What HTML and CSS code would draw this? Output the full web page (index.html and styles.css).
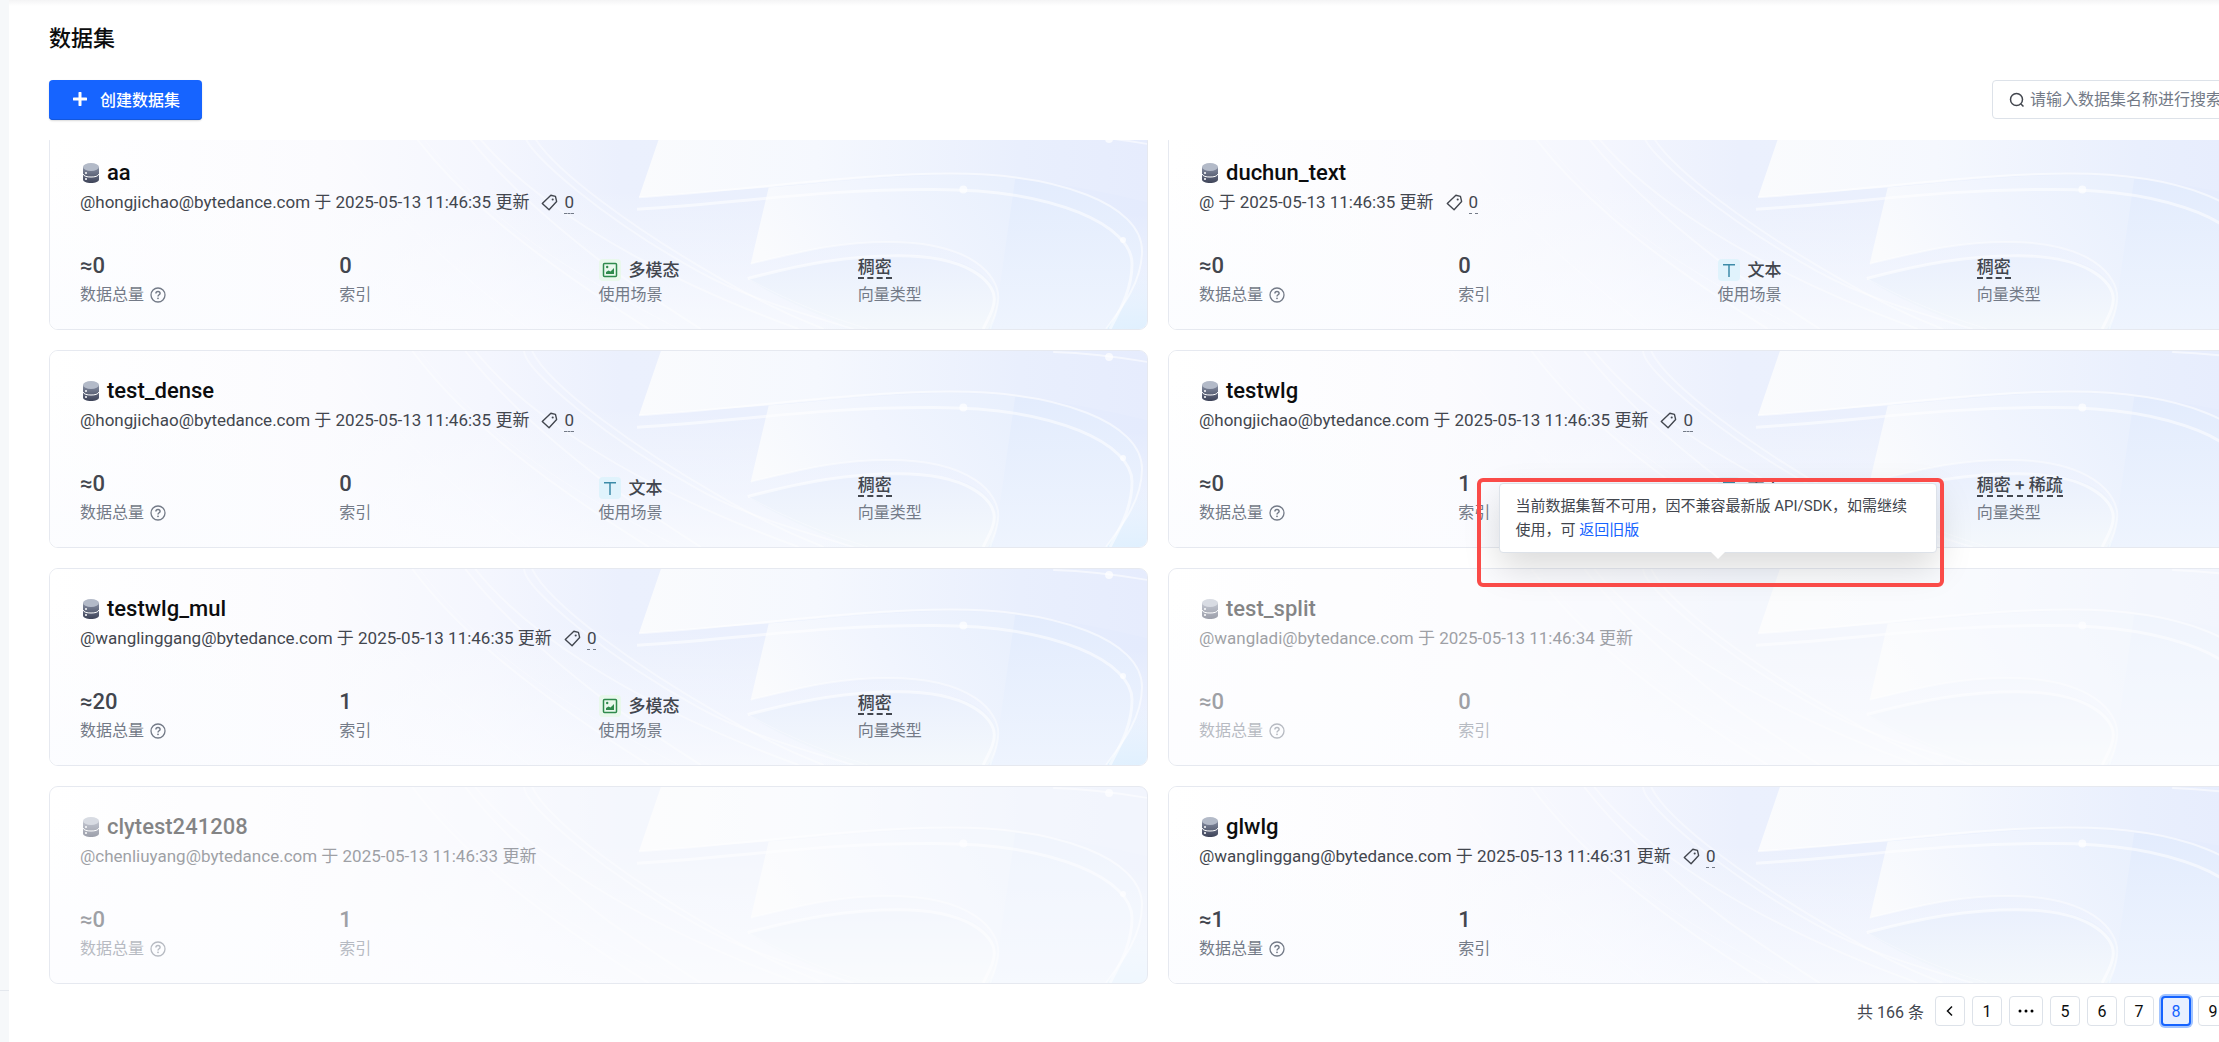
FILE: index.html
```html
<!DOCTYPE html>
<html lang="zh-CN">
<head>
    <meta charset="UTF-8">
    <title>数据集</title>
    <link rel="stylesheet" href="styles.css">
</head>
<body>

<!-- Shared shapes -->
<svg class="sprite" aria-hidden="true">
    <defs>
        <linearGradient id="base" x1="0" y1="0" x2="1" y2="0">
            <stop offset="0" stop-color="#ffffff"/>
            <stop offset="0.25" stop-color="#fbfbfe"/>
            <stop offset="0.4" stop-color="#f4f6fe"/>
            <stop offset="0.52" stop-color="#ebf0fd"/>
            <stop offset="0.8" stop-color="#e9effd"/>
            <stop offset="1" stop-color="#e4ebfd"/>
        </linearGradient>
        <linearGradient id="fade" x1="0.65" y1="0" x2="0.4" y2="1">
            <stop offset="0.3" stop-color="#fbfcff" stop-opacity="0"/>
            <stop offset="1" stop-color="#fbfcff" stop-opacity="0.8"/>
        </linearGradient>
        <linearGradient id="sheet-a" x1="0" y1="0" x2="1" y2="0">
            <stop offset="0" stop-color="#fafbfd"/>
            <stop offset="0.35" stop-color="#f5f8fe"/>
            <stop offset="0.75" stop-color="#e9effd"/>
            <stop offset="1" stop-color="#e6ecfd"/>
        </linearGradient>
        <linearGradient id="sheet-b" x1="0" y1="0.5" x2="1" y2="0.2">
            <stop offset="0" stop-color="#fafbfd"/>
            <stop offset="0.5" stop-color="#f1f5fe"/>
            <stop offset="1" stop-color="#e9f0fd"/>
        </linearGradient>
        <linearGradient id="sheet-c" x1="0" y1="0" x2="0" y2="1">
            <stop offset="0" stop-color="#eaf0fd"/>
            <stop offset="1" stop-color="#f4f8fc"/>
        </linearGradient>
        <linearGradient id="sheet-d" x1="0" y1="0" x2="0" y2="1">
            <stop offset="0" stop-color="#e3ecfd"/>
            <stop offset="1" stop-color="#eef4fe"/>
        </linearGradient>
        <radialGradient id="corner" cx="1" cy="1" r="0.3">
            <stop offset="0" stop-color="#e0f0fe"/>
            <stop offset="1" stop-color="#e0f0fe" stop-opacity="0"/>
        </radialGradient>
        <linearGradient id="drum" x1="0" y1="0" x2="0" y2="1">
            <stop offset="0" stop-color="#858da0"/>
            <stop offset="1" stop-color="#3d4358"/>
        </linearGradient>
    </defs>

    <symbol id="card-art" viewBox="0 0 1099 198" preserveAspectRatio="none">
        <rect width="1099" height="198" fill="url(#base)"/>
        <rect width="1099" height="198" fill="url(#fade)"/>
        <rect width="1099" height="198" fill="url(#corner)"/>
        <path fill="url(#sheet-d)" d="M966 46C1050 54 1094 86 1094 119C1094 150 1075 175 1058 198H944Z"/>
        <path fill="url(#sheet-a)" d="M612 0H1099V70C1060 60 1010 50 966 46C900 37 837 44 719 55L590 65Z"/>
        <path fill="url(#sheet-b)" d="M720 55C837 44 900 38 967 46L950 166C945 140 925 110 840 110C790 110 756 119 702 132Z"/>
        <path fill="url(#sheet-c)" d="M699 147C756 132 800 124 858 124C940 124 965 160 940 198H805C765 182 725 165 699 147Z"/>
        <g fill="none" stroke="#ffffff" stroke-width="2" stroke-opacity="0.55">
            <path d="M590 65C700 58 800 41 903 41C1010 41 1094 72 1094 119C1094 150 1075 175 1058 198"/>
            <path stroke-width="3" d="M588 77C700 70 770 57 880 57C1010 56 1084 95 1084 132C1084 160 1070 182 1062 198"/>
            <path d="M1005 1C1040 2 1070 6 1099 11"/>
            <path stroke-opacity="0.45" d="M702 132C756 119 790 110 840 110C925 110 950 145 950 166C950 180 944 190 942 198"/>
            <path stroke-width="3" d="M699 147C756 132 800 124 850 124C920 124 946 150 946 168C946 180 938 190 935 198"/>
            <g stroke-opacity="0.4">
                <path d="M475 0C475 20 560 90 650 140C700 168 760 184 805 198"/>
                <path d="M483 0C500 36 590 100 670 146C700 164 740 184 775 198"/>
                <path d="M416 0C450 45 500 90 560 136C600 164 630 184 652 198"/>
                <path d="M426 0C470 56 570 132 750 198"/>
                <path d="M363 0C400 50 460 110 600 198"/>
            </g>
            <g stroke-opacity="0.3" stroke-width="1">
                <path d="M282 0C320 56 370 110 480 198"/>
                <path d="M370 0C430 80 500 130 630 198"/>
                <path d="M699 147C740 170 780 186 820 198"/>
            </g>
        </g>
        <g fill="#ffffff" fill-opacity="0.7">
            <circle cx="915" cy="57" r="4"/>
            <circle cx="1075" cy="108" r="3"/>
            <circle cx="1061" cy="6" r="4"/>
        </g>
    </symbol>

    <symbol id="icon-db" viewBox="0 0 16 20">
        <path fill="url(#drum)" d="M0 4H16V16.5C16 18.6 12.4 20 8 20S0 18.6 0 16.5Z"/>
        <ellipse cx="8" cy="4" rx="8" ry="4" fill="#b3bac8"/>
        <path fill="none" stroke="#ffffff" stroke-width="1" d="M0 11C1 13.400 4 14 8 14S15 13.400 16 11"/>
        <circle cx="3" cy="10" r="1" fill="#ffffff"/>
        <circle cx="3" cy="16" r="1" fill="#ffffff"/>
    </symbol>

    <symbol id="icon-tag" viewBox="0 0 16 16">
        <path fill="none" stroke="currentColor" stroke-width="1.300" stroke-linejoin="round" d="M9.300 1.200L13.600 2.300L14.700 7L7.600 14.800L1.200 9Z"/>
        <circle cx="11" cy="5.200" r="1" fill="currentColor"/>
    </symbol>

    <symbol id="icon-help" viewBox="0 0 16 16">
        <circle cx="8" cy="8" r="7" fill="none" stroke="currentColor" stroke-width="1.300"/>
        <path fill="none" stroke="currentColor" stroke-width="1.400" d="M5.900 6.500C5.900 5.200 6.800 4.500 8 4.500S10.100 5.200 10.100 6.400C10.100 7.600 8 7.900 8 9.400"/>
        <circle cx="8" cy="11.300" r="0.900" fill="currentColor"/>
    </symbol>

    <symbol id="icon-image" viewBox="0 0 22 22">
        <rect width="22" height="22" rx="4" fill="#e9f8ec"/>
        <rect x="4.500" y="4.500" width="13" height="13" rx="1" fill="none" stroke="#2f8a4c" stroke-width="1.500"/>
        <path fill="#2f8a4c" d="M7 15V13L9.500 11.500L11.500 12.500L15 9V15Z"/>
        <circle cx="8.200" cy="8" r="1.200" fill="#2f8a4c"/>
    </symbol>

    <symbol id="icon-text" viewBox="0 0 22 22">
        <rect width="22" height="22" rx="4" fill="#e0f3fc"/>
        <path fill="none" stroke="#3c8ba8" stroke-width="1.500" d="M5 5.700H17M11 5.700V18"/>
    </symbol>
</svg>

<div class="layout">
    <aside class="sidebar"><div class="sidebar-footer"></div></aside>

    <main class="page">
        <h1 class="page-title">数据集</h1>

        <div class="toolbar">
            <button class="create-button" type="button">
                <svg width="14" height="14" viewBox="0 0 14 14" aria-hidden="true"><path d="M7 1V13M1 7H13" stroke="#fff" stroke-width="3" stroke-linecap="round"/></svg>
                创建数据集
            </button>
            <label class="search">
                <svg width="16" height="16" viewBox="0 0 16 16" aria-hidden="true"><circle cx="7.500" cy="7.500" r="6" fill="none" stroke="#42464e" stroke-width="1.500"/><path d="M12 12L14.500 14.500" stroke="#42464e" stroke-width="1.500"/></svg>
                <input type="text" placeholder="请输入数据集名称进行搜索" aria-label="搜索数据集">
            </label>
        </div>

        <div class="list">
            <div class="cards">

                <article class="card">
                    <svg class="card-art"><use href="#card-art"/></svg>
                    <div class="card-body">
                        <h2 class="card-title"><svg class="db"><use href="#icon-db"/></svg>aa</h2>
                        <p class="card-meta">@hongjichao@bytedance.com 于 2025-05-13 11:46:35 更新 <svg class="tag"><use href="#icon-tag"/></svg><span class="tag-count">0</span></p>
                        <dl class="stats">
                            <div class="stat"><dd>≈0</dd><dt>数据总量 <svg class="help"><use href="#icon-help"/></svg></dt></div>
                            <div class="stat"><dd>0</dd><dt>索引</dt></div>
                            <div class="stat"><dd class="scene"><svg><use href="#icon-image"/></svg>多模态</dd><dt>使用场景</dt></div>
                            <div class="stat"><dd><span class="vector">稠密</span></dd><dt>向量类型</dt></div>
                        </dl>
                    </div>
                </article>

                <article class="card">
                    <svg class="card-art"><use href="#card-art"/></svg>
                    <div class="card-body">
                        <h2 class="card-title"><svg class="db"><use href="#icon-db"/></svg>duchun_text</h2>
                        <p class="card-meta">@ 于 2025-05-13 11:46:35 更新 <svg class="tag"><use href="#icon-tag"/></svg><span class="tag-count">0</span></p>
                        <dl class="stats">
                            <div class="stat"><dd>≈0</dd><dt>数据总量 <svg class="help"><use href="#icon-help"/></svg></dt></div>
                            <div class="stat"><dd>0</dd><dt>索引</dt></div>
                            <div class="stat"><dd class="scene"><svg><use href="#icon-text"/></svg>文本</dd><dt>使用场景</dt></div>
                            <div class="stat"><dd><span class="vector">稠密</span></dd><dt>向量类型</dt></div>
                        </dl>
                    </div>
                </article>

                <article class="card">
                    <svg class="card-art"><use href="#card-art"/></svg>
                    <div class="card-body">
                        <h2 class="card-title"><svg class="db"><use href="#icon-db"/></svg>test_dense</h2>
                        <p class="card-meta">@hongjichao@bytedance.com 于 2025-05-13 11:46:35 更新 <svg class="tag"><use href="#icon-tag"/></svg><span class="tag-count">0</span></p>
                        <dl class="stats">
                            <div class="stat"><dd>≈0</dd><dt>数据总量 <svg class="help"><use href="#icon-help"/></svg></dt></div>
                            <div class="stat"><dd>0</dd><dt>索引</dt></div>
                            <div class="stat"><dd class="scene"><svg><use href="#icon-text"/></svg>文本</dd><dt>使用场景</dt></div>
                            <div class="stat"><dd><span class="vector">稠密</span></dd><dt>向量类型</dt></div>
                        </dl>
                    </div>
                </article>

                <article class="card">
                    <svg class="card-art"><use href="#card-art"/></svg>
                    <div class="card-body">
                        <h2 class="card-title"><svg class="db"><use href="#icon-db"/></svg>testwlg</h2>
                        <p class="card-meta">@hongjichao@bytedance.com 于 2025-05-13 11:46:35 更新 <svg class="tag"><use href="#icon-tag"/></svg><span class="tag-count">0</span></p>
                        <dl class="stats">
                            <div class="stat"><dd>≈0</dd><dt>数据总量 <svg class="help"><use href="#icon-help"/></svg></dt></div>
                            <div class="stat"><dd>1</dd><dt>索引</dt></div>
                            <div class="stat"><dd class="scene"><svg><use href="#icon-text"/></svg>文本</dd><dt>使用场景</dt></div>
                            <div class="stat"><dd><span class="vector">稠密 + 稀疏</span></dd><dt>向量类型</dt></div>
                        </dl>
                    </div>
                </article>

                <article class="card">
                    <svg class="card-art"><use href="#card-art"/></svg>
                    <div class="card-body">
                        <h2 class="card-title"><svg class="db"><use href="#icon-db"/></svg>testwlg_mul</h2>
                        <p class="card-meta">@wanglinggang@bytedance.com 于 2025-05-13 11:46:35 更新 <svg class="tag"><use href="#icon-tag"/></svg><span class="tag-count">0</span></p>
                        <dl class="stats">
                            <div class="stat"><dd>≈20</dd><dt>数据总量 <svg class="help"><use href="#icon-help"/></svg></dt></div>
                            <div class="stat"><dd>1</dd><dt>索引</dt></div>
                            <div class="stat"><dd class="scene"><svg><use href="#icon-image"/></svg>多模态</dd><dt>使用场景</dt></div>
                            <div class="stat"><dd><span class="vector">稠密</span></dd><dt>向量类型</dt></div>
                        </dl>
                    </div>
                </article>

                <article class="card disabled">
                    <svg class="card-art"><use href="#card-art"/></svg>
                    <div class="card-body">
                        <h2 class="card-title"><svg class="db"><use href="#icon-db"/></svg>test_split</h2>
                        <p class="card-meta">@wangladi@bytedance.com 于 2025-05-13 11:46:34 更新</p>
                        <dl class="stats">
                            <div class="stat"><dd>≈0</dd><dt>数据总量 <svg class="help"><use href="#icon-help"/></svg></dt></div>
                            <div class="stat"><dd>0</dd><dt>索引</dt></div>
                        </dl>
                    </div>
                    <div class="tooltip" role="tooltip">当前数据集暂不可用，因不兼容最新版 API/SDK，如需继续使用，可 <a href="#">返回旧版</a></div>
                    <div class="highlight"></div>
                </article>

                <article class="card disabled">
                    <svg class="card-art"><use href="#card-art"/></svg>
                    <div class="card-body">
                        <h2 class="card-title"><svg class="db"><use href="#icon-db"/></svg>clytest241208</h2>
                        <p class="card-meta">@chenliuyang@bytedance.com 于 2025-05-13 11:46:33 更新</p>
                        <dl class="stats">
                            <div class="stat"><dd>≈0</dd><dt>数据总量 <svg class="help"><use href="#icon-help"/></svg></dt></div>
                            <div class="stat"><dd>1</dd><dt>索引</dt></div>
                        </dl>
                    </div>
                </article>

                <article class="card">
                    <svg class="card-art"><use href="#card-art"/></svg>
                    <div class="card-body">
                        <h2 class="card-title"><svg class="db"><use href="#icon-db"/></svg>glwlg</h2>
                        <p class="card-meta">@wanglinggang@bytedance.com 于 2025-05-13 11:46:31 更新 <svg class="tag"><use href="#icon-tag"/></svg><span class="tag-count">0</span></p>
                        <dl class="stats">
                            <div class="stat"><dd>≈1</dd><dt>数据总量 <svg class="help"><use href="#icon-help"/></svg></dt></div>
                            <div class="stat"><dd>1</dd><dt>索引</dt></div>
                        </dl>
                    </div>
                </article>

            </div>
        </div>

        <nav class="pagination" aria-label="分页">
            <span class="total">共 166 条</span>
            <button type="button" aria-label="上一页"><svg width="12" height="12" viewBox="0 0 12 12"><path d="M8 1.500L3.500 6L8 10.500" fill="none" stroke="#0c0d0e" stroke-width="1.500"/></svg></button>
            <button type="button">1</button>
            <button type="button" class="more" aria-label="更多"><svg width="16" height="4" viewBox="0 0 16 4"><circle cx="2" cy="2" r="1.500"/><circle cx="8" cy="2" r="1.500"/><circle cx="14" cy="2" r="1.500"/></svg></button>
            <button type="button">5</button>
            <button type="button">6</button>
            <button type="button">7</button>
            <button type="button" class="current" aria-current="page">8</button>
            <button type="button">9</button>
            <button type="button" aria-label="下一页"></button>
        </nav>
    </main>
</div>

</body>
</html>
```

FILE: styles.css
```css
* {
    box-sizing: border-box;
}

body {
    margin: 0;
    font-family: Roboto, "Noto Sans CJK SC", sans-serif;
    font-size: 16px;
    color: #42464e;
    background-color: #fff;
    overflow: hidden;
}

button,
input {
    font: inherit;
}

.sprite {
    position: absolute;
    width: 0;
    height: 0;
}

.layout {
    display: flex;
    min-height: 100vh;
    background: linear-gradient(#f4f4f5, #fff 6px);
}

.sidebar {
    flex: none;
    display: flex;
    flex-direction: column;
    justify-content: flex-end;
    width: 9px;
    background-color: #f6f8fa;
}

.sidebar-footer {
    height: 52px;
    border-top: 1px solid #e4e8ee;
}

/* the content is wider than the window and runs out on the right */
.page {
    flex: none;
    width: calc(100% + 39px);
    padding: 21px 0 0 40px;
}

.page-title {
    margin: 0;
    font-size: 22px;
    font-weight: 500;
    line-height: 36px;
    color: #0c0d0e;
}

.toolbar {
    display: flex;
    justify-content: space-between;
    align-items: flex-start;
    height: 40px;
    margin: 23px 0 20px;
}

.create-button {
    display: flex;
    align-items: center;
    gap: 13px;
    height: 40px;
    padding: 0 22px 2px 24px;
    color: #fff;
    font-weight: 500;
    background-color: #1664ff;
    border: 0;
    border-radius: 4px;
    box-shadow: inset 0 -1px 0 #1357dd, 0 1px 2px rgba(0, 0, 0, 0.15);
    cursor: pointer;
}

.search {
    display: flex;
    align-items: center;
    gap: 5px;
    width: 275px;
    height: 39px;
    padding: 0 16px;
    background-color: #fff;
    border: 1px solid #dde2e9;
    border-radius: 4px;
}

.search svg {
    flex: none;
}

.search input {
    flex: 1;
    min-width: 0;
    padding: 0;
    border: 0;
    outline: 0;
    background: none;
}

.search input::placeholder {
    color: #737a87;
}

/* Card list, scrolled down a little */
.list {
    overflow: hidden;
}

.cards {
    display: grid;
    grid-template-columns: 1fr 1fr;
    gap: 20px;
    margin-top: -8px;
}

.card {
    position: relative;
    min-height: 198px;
    border: 1px solid #e6e9f0;
    border-radius: 9px;
}

.card-art {
    position: absolute;
    inset: 0;
    width: 100%;
    height: 100%;
    border-radius: 8px;
}

.card-body {
    position: relative;
    padding: 26px 30px 20px;
}

.disabled .card-art,
.disabled .card-body {
    opacity: 0.5;
}

.card-title {
    display: flex;
    align-items: center;
    gap: 8px;
    margin: 0;
    padding-left: 3px;
    font-size: 22px;
    font-weight: 500;
    line-height: 28px;
    color: #0c0d0e;
}

.db {
    width: 16px;
    height: 20px;
}

.card-meta {
    display: flex;
    align-items: center;
    margin: 1px 0 35px;
    font-size: 17px;
    line-height: 28px;
}

.tag {
    width: 17px;
    height: 17px;
    margin: 0 6px 0 12px;
}

.tag-count {
    line-height: 22px;
    border-bottom: 1px dashed #737a87;
}

.stats {
    display: grid;
    grid-template-columns: repeat(4, 1fr);
    margin: 0;
}

.stat {
    display: flex;
    flex-direction: column;
}

.stat dd {
    display: flex;
    align-items: flex-end;
    height: 30px;
    margin: 0;
    font-size: 22px;
    font-weight: 500;
    line-height: 30px;
}

.stat dt {
    display: flex;
    align-items: center;
    gap: 6px;
    line-height: 28px;
    color: #737a87;
}

.stat .scene {
    gap: 8px;
    font-size: 17px;
    line-height: 22px;
}

.scene svg {
    width: 22px;
    height: 22px;
}

.vector {
    margin-bottom: 2px;
    font-size: 17px;
    line-height: 20px;
    border-bottom: 2px dashed #42464e;
}

.help {
    width: 16px;
    height: 16px;
}

.tooltip {
    position: absolute;
    z-index: 2;
    left: 50%;
    bottom: calc(100% + 16px);
    width: 438px;
    padding: 10px 16px;
    font-size: 15px;
    line-height: 24px;
    background-color: #fff;
    border: 1px solid #dde2e9;
    border-radius: 4px;
    box-shadow: 0 14px 36px rgba(0, 0, 0, 0.15);
    transform: translateX(-50%);
}

.tooltip::after {
    content: "";
    position: absolute;
    left: 50%;
    top: 100%;
    border: 7px solid transparent;
    border-top-color: #fff;
    border-bottom: 0;
    transform: translateX(-50%);
}

.tooltip a {
    color: #1664ff;
    text-decoration: none;
}

.highlight {
    position: absolute;
    z-index: 3;
    left: calc(50% - 241px);
    top: -91px;
    width: 467px;
    height: 109px;
    border: 4px solid #fa4b48;
    border-radius: 6px;
    pointer-events: none;
}

.pagination {
    display: flex;
    align-items: center;
    justify-content: flex-end;
    gap: 7px;
    padding: 12px 2px 16px 0;
}

.total {
    margin-right: 4px;
}

.pagination button {
    display: flex;
    align-items: center;
    justify-content: center;
    width: 30px;
    height: 30px;
    padding: 0;
    color: #0c0d0e;
    background-color: #fff;
    border: 1px solid #dde2e9;
    border-radius: 4px;
    cursor: pointer;
}

.pagination .more {
    width: 34px;
}

.pagination .current {
    color: #1664ff;
    background-color: #e8f0ff;
    border: 2px solid #1664ff;
    box-shadow: 0 0 0 2px #a2c4ff;
}
```
